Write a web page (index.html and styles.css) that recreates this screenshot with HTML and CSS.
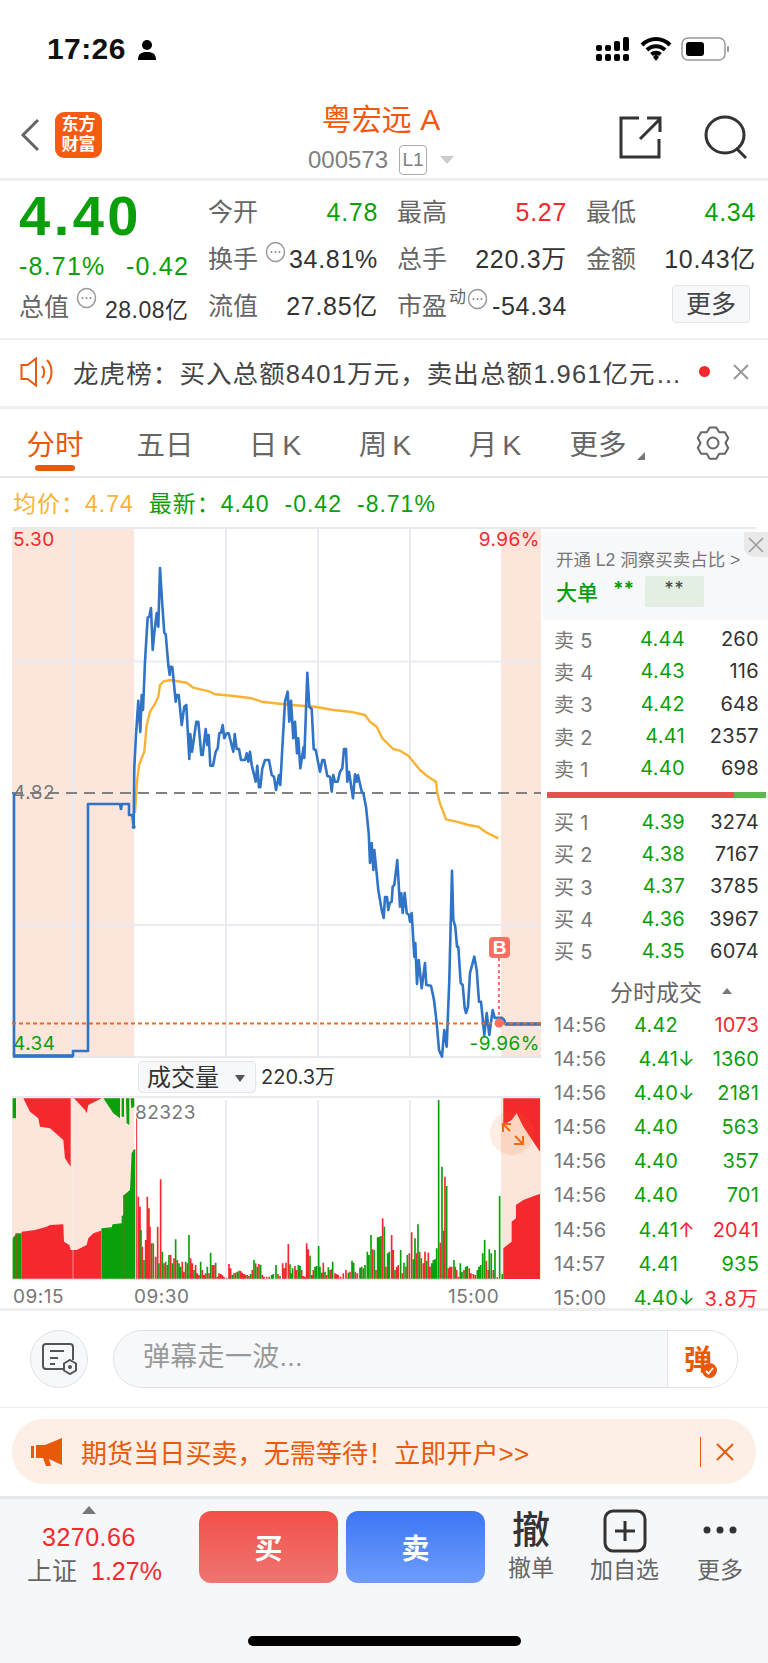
FILE: index.html
```html
<!DOCTYPE html>
<html lang="zh-CN">
<head>
<meta charset="utf-8">
<title>粤宏远A 000573</title>
<link rel="stylesheet" href="styles.css">
</head>
<body>
<div class="phone">

  <header class="status">
    <div class="clock">17:26
      <svg class="person" width="18" height="20" viewBox="0 0 18 20"><circle cx="9" cy="5" r="5"/><path d="M0 20c0-6 3-8 9-8s9 2 9 8z"/></svg>
    </div>
    <div class="sys">
      <svg width="36" height="24" viewBox="0 0 36 24"><g fill="#000"><rect x="1" y="8" width="6" height="6" rx="2"/><rect x="1" y="17" width="6" height="7" rx="2"/><rect x="10" y="8" width="6" height="6" rx="2"/><rect x="10" y="17" width="6" height="7" rx="2"/><rect x="19" y="4" width="6" height="10" rx="2"/><rect x="19" y="17" width="6" height="7" rx="2"/><rect x="28" y="0" width="6" height="14" rx="2"/><rect x="28" y="17" width="6" height="7" rx="2"/></g></svg>
      <svg width="32" height="24" viewBox="0 0 32 24"><path d="M2 8c8-8 20-8 28 0M7 13c5-5 13-5 18 0M11.500 17.500c2.500-2.500 6.500-2.500 9 0" fill="none" stroke="#000" stroke-width="4"/><path d="M13 20l3-3 3 3-3 4z"/></svg>
      <svg width="48" height="24" viewBox="0 0 48 24"><rect x="1" y="1" width="43" height="22" rx="6" fill="#fff" stroke="#999" stroke-width="1.500"/><rect x="5" y="5" width="18" height="14" rx="3"/><rect x="46" y="9" width="2" height="6" rx="1" fill="#999"/></svg>
    </div>
  </header>

  <nav class="topbar">
    <div class="topbar-left">
      <svg width="22" height="34" viewBox="0 0 22 34"><path d="M19 2L4 17l15 15" fill="none" stroke="#666" stroke-width="3"/></svg>
      <div class="logo"><span>东方</span><span>财富</span></div>
    </div>
    <div class="topbar-title">
      <div class="name">粤宏远 A</div>
      <div class="code">000573<span class="tier">L1</span><i class="caret"></i></div>
    </div>
    <div class="topbar-right">
      <svg width="44" height="44" viewBox="0 0 44 44"><path d="M21 3H3v39h38V24M22 24L42 4M29 3h13v14" fill="none" stroke="#333" stroke-width="3"/></svg>
      <svg width="44" height="44" viewBox="0 0 44 44"><ellipse cx="21" cy="20" rx="19" ry="18" fill="none" stroke="#333" stroke-width="3"/><path d="M32 33l10 10" stroke="#333" stroke-width="3"/></svg>
    </div>
  </nav>

  <section class="quote">
    <div class="quote-main">
      <div class="last">4.40</div>
      <div class="change"><span>-8.71%</span><span>-0.42</span></div>
      <div class="cap"><span class="lbl">总值</span><svg class="hint" width="21" height="22" viewBox="0 0 21 22"><use href="#more-dots"/></svg><span class="val small">28.08亿</span></div>
    </div>
    <div class="stats">
      <div class="stat"><span class="lbl">今开</span><span class="val up">4.78</span></div>
      <div class="stat"><span class="lbl">最高</span><span class="val red">5.27</span></div>
      <div class="stat"><span class="lbl">最低</span><span class="val up">4.34</span></div>
      <div class="stat"><span class="lbl">换手</span><svg class="hint h1" width="21" height="22" viewBox="0 0 21 22"><use href="#more-dots"/></svg><span class="val">34.81%</span></div>
      <div class="stat"><span class="lbl">总手</span><span class="val">220.3万</span></div>
      <div class="stat"><span class="lbl">金额</span><span class="val">10.43亿</span></div>
      <div class="stat"><span class="lbl">流值</span><span class="val">27.85亿</span></div>
      <div class="stat"><span class="lbl">市盈<sup>动</sup></span><svg class="hint h2" width="21" height="22" viewBox="0 0 21 22"><use href="#more-dots"/></svg><span class="val">-54.34</span></div>
      <div class="stat end"><button class="more">更多</button></div>
    </div>
    <svg class="defs" width="0" height="0"><defs><g id="more-dots"><ellipse cx="10.500" cy="11" rx="9" ry="9.500" fill="none" stroke="#999" stroke-width="1.500"/><g fill="#888"><circle cx="6.500" cy="11" r="1"/><circle cx="10.500" cy="11" r="1"/><circle cx="14.500" cy="11" r="1"/></g></g></defs></svg>
  </section>

  <section class="notice">
    <svg width="34" height="30" viewBox="0 0 34 30"><path d="M1.500 8h6L16 1.500v27L7.500 22h-6zM22 9c3 3 3 9 0 12M27 3c6 6 6 18 0 24" fill="none" stroke="#e85a0a" stroke-width="2"/></svg>
    <span class="notice-text">龙虎榜：买入总额8401万元，卖出总额1.961亿元…</span>
    <i class="dot"></i>
    <svg class="close" width="20" height="20" viewBox="0 0 20 20"><path d="M3 3l14 14M17 3L3 17" stroke="#999" stroke-width="2"/></svg>
  </section>

  <div class="tabs">
    <div class="tab on">分时</div>
    <div class="tab">五日</div>
    <div class="tab">日 K</div>
    <div class="tab">周 K</div>
    <div class="tab">月 K</div>
    <div class="tab more-tab">更多<i></i></div>
    <svg class="gear" width="36" height="34" viewBox="-1 -1 36 34"><path d="M13.700.4h6.600l2.900 4.800 5.700.1 3.300 5.800-2.700 4.900 2.700 5-3.300 5.700-5.700.1-2.900 4.900h-6.600l-2.900-4.900-5.700-.1-3.300-5.700 2.700-5-2.700-4.900 3.300-5.800 5.700-.1z" fill="none" stroke="#666" stroke-width="2" stroke-linejoin="round"/><circle cx="17" cy="16" r="5.500" fill="none" stroke="#666" stroke-width="2"/></svg>
  </div>

  <div class="legend">
    <span class="avg">均价：</span><span class="avg gap">4.74</span>
    <span class="up">最新：</span><span class="up gap">4.40</span><span class="up gap">-0.42</span><span class="up">-8.71%</span>
  </div>

  <section class="market">
    <div class="charts">
      <svg class="price" width="529" height="529" viewBox="12 529 529 529">
        <rect x="12" y="529" width="122" height="529" fill="#fce5da"/>
        <rect x="501" y="529" width="40" height="529" fill="#fce5da"/>
        <path d="M12 661.500H541M12 925H541M73 529V1058M226 529V1058M318 529V1058M410 529V1058" stroke="#e8ebf2" stroke-width="2" fill="none"/>
        <path d="M12 1057H541" stroke="#e2e5ea" stroke-width="1.500"/>
        <path d="M12 793H541" stroke="#808080" stroke-width="2.200" stroke-dasharray="11 7" fill="none"/>
        <text class="tick" x="13" y="546" fill="#f5282d">5.30</text>
        <text class="tick" x="540" y="546" text-anchor="end" fill="#f5282d">9.96%</text>
        <text class="tick" x="13" y="799" fill="#777">4.82</text>
        <text class="tick" x="13" y="1050" fill="#0aa00a">4.34</text>
        <text class="tick" x="540" y="1050" text-anchor="end" fill="#0aa00a">-9.96%</text>
        <polyline fill="none" stroke="#f9b233" stroke-width="2.400" stroke-linejoin="round" points="135,813 137,781.700 139,765 144.300,751.700 146.700,725 150,711.700 154.300,705 158.300,696.700 160,685 163.300,681.700 170,680 186.700,682.700 193.300,687.700 210,691.700 215,694.300 231.700,695.700 251.700,698.300 261.700,701.700 275,703.300 291.700,705 315,706.700 333.300,710 350,711.700 365,715 370,721.700 376.700,726.700 382.300,738.300 393.300,749 400,750.700 408.300,755.700 420,770 426.700,775.700 436,781.700 437.300,793.300 440,803.300 446,819.300 456.700,821.700 468.300,825 478.300,826.700 486.700,832.700 498.300,838.300"/>
        <polyline fill="none" stroke="#2f74c6" stroke-width="2.600" stroke-linejoin="round" points="14,793 14,1056 73,1056 73,1051 88,1051 88,804 120,804 121,809 122,804 129,804 129,815 132.300,815 133.700,827 134.300,768 136,735 138.300,700.700 140.300,732 141.700,695 143,710 145,661.700 146.700,633 147.700,617.700 149.300,616.700 151,608 152.700,650 154.300,633 156.700,613 158.300,626.700 160,568 162.300,605 164.300,633 165.700,634 168.300,665 169.700,675 170.300,666.700 172.300,667 175.700,701.700 176.700,695 178.700,695 181.700,725 184.300,706.700 186.300,705 189.300,759 190.300,734 192,751.700 194,738 196.300,721.700 198.300,721.700 201.300,755 202.700,755 205.700,729 207.300,745 208.700,735 210.300,765.700 213,765.700 215.700,751.700 217.700,748.300 219.300,733.300 221,732.700 222.700,725 224.300,738.300 226.700,733.300 228.700,733.300 233.300,751.700 234.700,734 236.700,749 239,749 241,760 245,760 246.700,753.300 248.300,761.700 250,751.700 251.700,765 255.700,781.700 257.300,765.700 259,787.300 260.300,787.300 262.300,768.300 265,760 269,760 271.700,775 274,776.700 276,790 279,775 280.300,785 282.300,748.300 285,701.700 287.700,691.700 289.300,721.700 291,700.700 293.300,738.300 295,721.700 297,753.300 298.300,738.300 300.300,768.300 303.700,746.700 304.300,758 307.300,672.700 309.300,706.700 311.700,709 313.700,749 315.700,750 320,771.700 322.300,760 324.300,760 327.300,776 330,776.700 331.700,791.700 333.300,775 335,781.700 337.700,781.700 340,771.700 342.300,768.300 344,749 346,749 347.300,781.700 349,771.700 353,798.300 355,774.300 356.700,781.700 358,775 361.700,791.700 363.300,793 366,806.700 368.700,833 370,863 371.700,843 373.300,870 374.300,850 376,866.700 378.300,890 381.700,910 383.700,918 385,897 387,897 388.300,910 389.700,903 391.700,901.700 392.700,886.700 394.300,885 397.300,860 400,906.700 401.300,893.300 402.700,913 404.700,893 406.700,913 409,915 410,921.700 411.700,913 414.300,956.700 415.300,943 417,984 418.700,960 421.700,988.300 425,963 426.300,985 431,985.700 434,1000 436.700,1023 439,1050 442,1056.700 444.300,1030 446.700,1046.700 449.300,980 452,870.700 453.300,920 455.300,926.700 457,946.700 458.300,946.700 460.700,983 462.700,985 464.700,1008 466,1013 468,1006.700 470,973 474.300,956.700 476.700,970 479,1001.700 481,1001.700 484.300,1035 486.700,1013 489.300,1035 492.700,1010 494.700,1018 497.300,1017.700 501.700,1017.700 504.300,1020 505.300,1024 541,1024"/>
        <path d="M505 1024H541M13 1056H73" stroke="#2f74c6" stroke-width="3.400" fill="none"/>
        <circle cx="133.700" cy="827" r="2" fill="#2f74c6"/>
        <path d="M12 1023.500H541" stroke="#ee6a22" stroke-width="2" stroke-dasharray="4 3" fill="none"/>
        <path d="M499 958V1022" stroke="#fb6f63" stroke-width="2" stroke-dasharray="3 3" fill="none"/>
        <circle cx="499" cy="1023" r="4.500" fill="#fb6f63"/>
        <rect x="489" y="937" width="21" height="21" rx="4" fill="#fb6f63"/>
        <text class="flag" x="499.500" y="954" text-anchor="middle">B</text>
      </svg>

      <div class="vol-head">
        <div class="vol-select">成交量<i></i></div>
        <span class="vol-total">220.3万</span>
      </div>

      <svg class="volume" width="529" height="212" viewBox="12 1096 529 212">
        <rect x="12" y="1098" width="122" height="181" fill="#fce5da"/>
        <rect x="501" y="1098" width="40" height="181" fill="#fce5da"/>
        <path d="M12 1097H541" stroke="#e2e5ea" stroke-width="1.500"/>
        <path d="M226 1100V1279M318 1100V1279M410 1100V1279" stroke="#e4e7ee" stroke-width="1.500"/>
        <g transform="translate(10 1090) scale(.3333)">
          <path fill="#f5282d" d="M40 25L60 65 85 85 90 110 120 115 160 150 165 205 182 230V25zM192 25L225 60 230 70 235 45 275 25zM35 567V425L75 420 110 410 120 405 160 403 162 455 178 465 182 480 200 480 230 465 235 445 250 430 273 422V567z"/>
          <path fill="#0aa00a" d="M8 25H18V85H8zM280 25L310 70 330 85V25zM335 25H342V80H335zM348 25H358V105L350 100zM362 25H373V50L364 55zM8 567V445L20 430H35V567zM274 567V415L305 412 308 403 335 400 335 378 342 375 342 315 360 300 365 190 372 178 376 178V567z"/>
          <path fill="none" stroke="#f5282d" stroke-width="3" d="M18 567V430M341 567V315M380 567V85"/>
          <path fill="none" stroke="#fff" stroke-opacity=".45" stroke-width="3" d="M189 25V567"/>
          <path fill="none" stroke="#f5282d" stroke-width="5" d="M385 567V320M390 567V350M397 567V470M407 567V450M412 567V320M417 567V355M420 567V410M430 567V460M437 567V500M443 567V410M452 567V268M462 567V520M472 567V525M482 567V495M492 567V505M502 567V510M517 567V515M522 567V545M532 567V520M542 567V505M547 567V520M557 567V525M562 567V550M567 567V555M577 567V540M582 567V555M587 567V550M597 567V550M607 567V525M612 567V525M622 567V560M627 567V550M632 567V552M637 567V555M642 567V560M657 567V522M662 567V535M672 567V550M682 567V545M692 567V543M697 567V548M702 567V552M707 567V555M717 567V558M727 567V540M737 567V520M747 567V522M757 567V555M762 567V560M770 567V560M778 567V560"/>
          <path fill="none" stroke="#0aa00a" stroke-width="5" d="M393 567V420M402 567V510M425 567V460M447 567V520M457 567V485M467 567V515M477 567V495M487 567V520M497 567V448M507 567V520M512 567V530M527 567V515M537 567V435M552 567V540M572 567V515M592 567V530M602 567V488M617 567V518M650 567V563M667 567V555M677 567V548M687 567V542M712 567V555M722 567V552M732 567V510M742 567V530M752 567V525"/>
        </g>
        <g transform="translate(270 1090) scale(.3333)">
          <path fill="none" stroke="#f5282d" stroke-width="5" d="M24 567V552M38 567V520M43 567V535M48 567V518M55 567V462M75 567V528M80 567V540M95 567V540M100 567V558M105 567V560M110 567V460M115 567V478M125 567V555M130 567V540M155 567V548M160 567V518M170 567V555M180 567V540M185 567V538M195 567V550M200 567V552M205 567V555M212 567V560M220 567V550M228 567V540M240 567V545M256 567V545M262 567V550M280 567V535M308 567V478M318 567V540M338 567V385M348 567V530M365 567V435M370 567V480M380 567V530M385 567V525M397 567V550M408 567V530M418 567V490M425 567V427M440 567V490M449 567V485M460 567V520M465 567V485M475 567V488M480 567V530M511 567V458M521 567V422M525 567V260M535 567V535M540 567V530M545 567V530M556 567V530M560 567V540M566 567V560M582 567V540M598 567V535M603 567V550M610 567V552M616 567V555M649 567V512M655 567V540M670 567V540M682 567V562"/>
          <path fill="none" stroke="#0aa00a" stroke-width="5" d="M5 567V555M10 567V552M18 567V525M30 567V558M60 567V523M65 567V550M68 567V535M85 567V525M90 567V527M120 567V497M135 567V530M140 567V528M146 567V468M150 567V530M165 567V545M175 567V532M188 567V515M235 567V548M246 567V512M251 567V518M270 567V533M275 567V530M285 567V525M292 567V485M297 567V495M303 567V435M313 567V480M323 567V442M328 567V440M333 567V438M343 567V410M353 567V490M358 567V485M375 567V540M392 567V480M402 567V518M412 567V495M430 567V508M435 567V445M444 567V403M454 567V505M470 567V512M485 567V520M490 567V510M495 567V508M500 567V475M506 567V30M516 567V230M530 567V288M552 567V510M571 567V520M576 567V545M587 567V530M592 567V528M622 567V540M627 567V530M632 567V525M638 567V490M644 567V450M658 567V478M664 567V490M675 567V480M689 567V318M697 567V552"/>
          <path fill="#f5282d" d="M700 25H810V185L790 155 760 110 740 70 725 90 700 105zM700 567V475L725 455 725 395 738 385 738 345 760 330 800 315 810 312V567z"/>
        </g>
        <circle cx="512" cy="1133" r="22" fill="#f06a14" fill-opacity=".12"/>
        <path d="M503 1132V1124H511M503 1124L510 1131M523 1136V1144H514M523 1144L515 1136" fill="none" stroke="#f06a14" stroke-width="2"/>
        <path d="M12 1279.500H501" stroke="#e2e5ea" stroke-width="1.500"/>
        <text class="tick" x="135" y="1119" fill="#777">82323</text>
        <text class="tick" x="13" y="1303" fill="#777">09:15</text>
        <text class="tick" x="134" y="1303" fill="#777">09:30</text>
        <text class="tick" x="448" y="1303" fill="#777">15:00</text>
      </svg>
    </div>

    <aside class="panel">
      <div class="promo">
        <span class="promo-x"><svg width="16" height="16" viewBox="0 0 16 16"><path d="M1 1l14 14M15 1L1 15" stroke="#999" stroke-width="1.500"/></svg></span>
        <div class="promo-title">开通 L2 洞察买卖占比 &gt;</div>
        <div class="promo-row"><b>大单</b><span class="stars">**</span><span class="starbox">**</span></div>
      </div>
      <div class="book">
        <div class="level"><span class="side">卖 5</span><span class="up">4.44</span><span>260</span></div>
        <div class="level"><span class="side">卖 4</span><span class="up">4.43</span><span>116</span></div>
        <div class="level"><span class="side">卖 3</span><span class="up">4.42</span><span>648</span></div>
        <div class="level"><span class="side">卖 2</span><span class="up">4.41</span><span>2357</span></div>
        <div class="level"><span class="side">卖 1</span><span class="up">4.40</span><span>698</span></div>
      </div>
      <div class="ratio"><i class="ratio-buy"></i></div>
      <div class="book">
        <div class="level"><span class="side">买 1</span><span class="up">4.39</span><span>3274</span></div>
        <div class="level"><span class="side">买 2</span><span class="up">4.38</span><span>7167</span></div>
        <div class="level"><span class="side">买 3</span><span class="up">4.37</span><span>3785</span></div>
        <div class="level"><span class="side">买 4</span><span class="up">4.36</span><span>3967</span></div>
        <div class="level"><span class="side">买 5</span><span class="up">4.35</span><span>6074</span></div>
      </div>
      <div class="ticks-title">分时成交<i></i></div>
      <div class="ticks">
        <div class="trade"><span class="t">14:56</span><span class="up">4.42</span><span></span><span class="red">1073</span></div>
        <div class="trade"><span class="t">14:56</span><span class="up">4.41</span><span class="up">↓</span><span class="up">1360</span></div>
        <div class="trade"><span class="t">14:56</span><span class="up">4.40</span><span class="up">↓</span><span class="up">2181</span></div>
        <div class="trade"><span class="t">14:56</span><span class="up">4.40</span><span></span><span class="up">563</span></div>
        <div class="trade"><span class="t">14:56</span><span class="up">4.40</span><span></span><span class="up">357</span></div>
        <div class="trade"><span class="t">14:56</span><span class="up">4.40</span><span></span><span class="up">701</span></div>
        <div class="trade"><span class="t">14:56</span><span class="up">4.41</span><span class="red">↑</span><span class="red">2041</span></div>
        <div class="trade"><span class="t">14:57</span><span class="up">4.41</span><span></span><span class="up">935</span></div>
        <div class="trade"><span class="t">15:00</span><span class="up">4.40</span><span class="up">↓</span><span class="red wide">3.8万</span></div>
      </div>
    </aside>
  </section>

  <section class="comment">
    <div class="doc-btn">
      <svg width="36" height="32" viewBox="0 0 36 32"><path d="M24 26H5c-2 0-3-1-3-3V4c0-2 1-3 3-3h24c2 0 3 1 3 3v13" fill="none" stroke="#555" stroke-width="2"/><path d="M9 8h14M9 15h8M9 21h5" stroke="#555" stroke-width="2"/><path d="M29 17l6 3.500v7L29 31l-6-3.500v-7z" fill="none" stroke="#555" stroke-width="2"/><circle cx="29" cy="24" r="2" fill="#555"/></svg>
    </div>
    <div class="danmu">
      <span class="danmu-hint">弹幕走一波...</span>
      <span class="danmu-send">弹<svg width="15" height="15" viewBox="0 0 15 15"><circle cx="7.500" cy="7.500" r="7.500" fill="#e85a0a"/><path d="M4 8l2.500 2.500L11 5" fill="none" stroke="#fff" stroke-width="1.800"/></svg></span>
    </div>
  </section>

  <section class="banner-wrap">
    <div class="banner">
      <svg width="32" height="28" viewBox="0 0 32 28"><path d="M0 8h3v12H0zM5 7h9L31 0v27l-13-6 2 7h-5l-3-8H5z" fill="#e85a0a"/></svg>
      <span class="banner-text">期货当日买卖，无需等待！立即开户&gt;&gt;</span>
      <i class="banner-sep"></i>
      <svg width="18" height="18" viewBox="0 0 18 18"><path d="M1 1l16 16M17 1L1 17" stroke="#e85a0a" stroke-width="2"/></svg>
    </div>
  </section>

  <footer class="dock">
    <div class="index">
      <i class="index-up"></i>
      <div class="index-val">3270.66</div>
      <div class="index-row"><span class="lbl">上证</span><span class="red">1.27%</span></div>
    </div>
    <div class="trade-btns">
      <button class="buy">买</button>
      <button class="sell">卖</button>
    </div>
    <div class="action first"><span class="glyph">撤</span><span class="cap-text">撤单</span></div>
    <div class="action add">
      <svg width="44" height="44" viewBox="0 0 44 44"><rect x="2" y="2" width="40" height="40" rx="8" fill="none" stroke="#333" stroke-width="3"/><path d="M22 12v20M12 22h20" stroke="#333" stroke-width="3"/></svg>
      <span class="cap-text">加自选</span>
    </div>
    <div class="action last-act">
      <svg width="36" height="44" viewBox="0 0 36 44"><circle cx="5" cy="21" r="3.500" fill="#333"/><circle cx="18" cy="21" r="3.500" fill="#333"/><circle cx="31" cy="21" r="3.500" fill="#333"/></svg>
      <span class="cap-text">更多</span>
    </div>
    <i class="home"></i>
  </footer>
</div>
</body>
</html>
```
FILE: styles.css
```css
* { box-sizing: border-box; }
html, body { margin: 0; padding: 0; background: #fff; }
body { font-family: "Liberation Sans", "Noto Sans CJK SC", sans-serif; color: #333; }
i { display: block; font-style: normal; }
.phone { width: 768px; height: 1663px; overflow: hidden; position: relative; }

.up { color: #0a9f0a; }
.red { color: #f5282d; }
.avg { color: #f9b233; }

/* status bar */
.status { height: 96px; display: flex; justify-content: space-between; padding: 32px 39px 0 47px; align-items: flex-start; }
.clock { font-size: 30px; font-weight: 700; color: #111; line-height: 34px; display: flex; align-items: center; gap: 12px; letter-spacing: .4px; }
.person { margin-top: 2px; }
.sys { display: flex; gap: 9px; align-items: center; margin-top: 5px; }

/* title bar */
.topbar { height: 85px; display: grid; grid-template-columns: 1fr auto 1fr; border-bottom: 3px solid #eee; }
.topbar-left { display: flex; align-items: center; gap: 14px; padding: 0 0 5px 19px; }
.logo { width: 47px; height: 46px; border-radius: 9px; background: #f95a12; color: #fff; font-size: 17px; font-weight: 700; line-height: 20px; display: flex; flex-direction: column; align-items: center; justify-content: center; }
.topbar-title { text-align: center; padding-right: 6px; }
.name { font-size: 30px; line-height: 36px; color: #f4570c; margin-top: 6px; }
.code { font-size: 24px; line-height: 32px; color: #808080; display: flex; align-items: center; justify-content: center; margin-top: 6px; }
.tier { font-size: 19px; line-height: 28px; width: 28px; border: 1px solid #aaa; border-radius: 4px; margin-left: 11px; }
.caret { border: 7px solid transparent; border-top: 8px solid #ccc; border-bottom: 0; margin-left: 13px; }
.topbar-right { display: flex; justify-content: flex-end; gap: 42px; padding: 19px 20px 0 0; }

/* quote */
.quote { height: 159px; display: flex; padding-left: 19px; border-bottom: 2px solid #eee; position: relative; }
.defs { position: absolute; }
.quote-main { width: 189px; flex: none; }
.last { font-size: 56px; font-weight: 700; line-height: 50px; color: #0a9f0a; letter-spacing: 3.500px; margin-top: 10px; }
.change { font-size: 25px; line-height: 30px; color: #0a9f0a; display: flex; justify-content: space-between; width: 170px; margin-top: 10px; letter-spacing: 1.200px; }
.cap { display: flex; align-items: center; margin-top: 6px; height: 36px; }
.cap .hint { margin: -14px 8px 0 7px; }
.cap .val { position: relative; top: 3px; }
.small { font-size: 23px; letter-spacing: .5px; }
.stats { display: grid; grid-template-columns: repeat(3, 170px); column-gap: 19px; grid-auto-rows: 47px; padding-top: 7px; }
.stat { display: flex; align-items: center; font-size: 25px; line-height: 30px; position: relative; }
.stat .val { margin-left: auto; color: #333; letter-spacing: .7px; }
.stat .val.up { color: #0a9f0a; }
.stat .val.red { color: #f5282d; }
.lbl { color: #666; font-size: 25px; }
.lbl sup { font-size: 17px; line-height: 0; vertical-align: 12px; margin-left: 2px; }
.hint { flex: none; margin-top: -14px; }
.hint.h1 { margin-left: 7px; }
.hint.h2 { margin-left: 1px; }
.end { justify-content: flex-end; }
.more { width: 78px; height: 38px; font: inherit; font-size: 25px; color: #444; background: #f7f8fa; border: 1px solid #e3e5e8; border-radius: 4px; padding: 0; margin: -3px 6px 0 0; }

/* notice */
.notice { height: 69px; display: flex; align-items: center; padding: 0 0 3px 20px; border-bottom: 3px solid #eee; }
.notice-text { font-size: 25.500px; letter-spacing: 1.100px; color: #444; margin-left: 19px; width: 626px; white-space: nowrap; }
.dot { width: 11px; height: 11px; border-radius: 50%; background: #f5282d; flex: none; }
.close { margin-left: 21px; }

/* chart tabs */
.tabs { height: 69px; display: grid; grid-template-columns: repeat(6, 110px) 1fr; border-bottom: 2px solid #e6e8ee; }
.tab { font-size: 28.500px; line-height: 34px; color: #666; text-align: center; padding-top: 19px; position: relative; word-spacing: -3px; }
.tab.on { color: #e85a0a; }
.tab.on::after { content: ""; display: block; width: 40px; height: 6px; border-radius: 3px; background: #e85a0a; margin: 3px auto 0; }
.more-tab { padding-right: 14px; }
.more-tab i { position: absolute; left: 87px; top: 43px; border: 4px solid transparent; border-right-color: #777; border-bottom-color: #777; }
.gear { margin: 17px 0 0 35px; }

/* legend */
.legend { height: 49px; padding: 12px 0 0 13px; font-size: 23px; line-height: 28px; white-space: nowrap; display: flex; }
.legend .gap { margin-right: 15px; }
.legend span { letter-spacing: 1px; }

/* market area */
.market { height: 781px; margin: 0 12px; display: flex; border-top: 2px solid #e6e9f0; }
.charts { width: 529px; flex: none; }
.price, .volume { display: block; }
.tick { font-family: Inter, "Liberation Sans", sans-serif; font-size: 19px; letter-spacing: .5px; }
.flag { font-family: "Liberation Sans", sans-serif; font-size: 19px; font-weight: 700; fill: #fff; }
.vol-head { height: 38px; padding: 3px 0 0 126px; display: flex; align-items: flex-start; }
.vol-select { width: 118px; height: 32px; border: 1px solid #e4e6ea; border-radius: 4px; background: #f7f8fa; font-size: 24px; line-height: 32px; padding-left: 8px; position: relative; color: #333; }
.vol-select i { position: absolute; left: 96px; top: 13px; border: 5px solid transparent; border-top: 7px solid #555; border-bottom: 0; }
.vol-total { font-family: Inter, "Noto Sans CJK SC", sans-serif; font-size: 20px; line-height: 32px; margin-left: 5px; color: #333; }

/* order book */
.panel { flex: 1; margin-right: -12px; position: relative; font-family: Inter, "Noto Sans CJK SC", sans-serif; padding-top: 3px; min-width: 0; }
.promo { height: 88px; background: #f7f8fa; margin: 0 0 3px 2px; padding: 17px 0 0 13px; position: relative; }
.promo-x { position: absolute; right: 0; top: 0; width: 24px; height: 25px; background: #e9e9e9; border-bottom-left-radius: 10px; display: flex; align-items: center; justify-content: center; }
.promo-title { font-family: "Liberation Sans", "Noto Sans CJK SC", sans-serif; font-size: 17.500px; line-height: 22px; color: #777; white-space: nowrap; }
.promo-row { display: flex; align-items: flex-start; color: #0a9f0a; margin-top: 5px; }
.promo-row b { font-family: "Noto Sans CJK SC", sans-serif; font-size: 21px; line-height: 30px; font-weight: 500; }
.stars { font-size: 19px; line-height: 26px; font-weight: 700; margin-left: 15px; width: 32px; }
.starbox { width: 59px; height: 31px; background: #e2efe2; color: #444; font-size: 18px; line-height: 26px; text-align: center; border-radius: 2px; letter-spacing: 1px; }
.book { display: grid; grid-auto-rows: 32.300px; padding-left: 13px; padding-right: 9px; }
.level { display: grid; grid-template-columns: 61px 70px 1fr; align-items: center; font-size: 20px; letter-spacing: .3px; color: #333; }
.level span { text-align: right; }
.level .side { text-align: left; color: #777; }
.ratio { margin: 8px 2px 7px 6px; height: 6px; background: #5ab94a; }
.ratio-buy { width: 187px; height: 6px; background: #e8504f; }
.ticks-title { font-family: "Noto Sans CJK SC", sans-serif; font-size: 23px; line-height: 34px; color: #666; padding-left: 69px; display: flex; align-items: center; white-space: nowrap; margin-top: 7px; }
.ticks-title i { border: 5px solid transparent; border-bottom: 6px solid #777; border-top: 0; margin-left: 20px; }
.ticks { display: grid; grid-auto-rows: 34.100px; padding: 0 9px 0 13px; }
.trade { display: grid; grid-template-columns: 60px 64px 16px 1fr; align-items: center; font-size: 20px; letter-spacing: .2px; white-space: nowrap; }
.trade span { text-align: right; }
.trade .t { text-align: left; color: #777; }
.trade .wide { letter-spacing: 1.200px; }

/* comment bar */
.comment { height: 100px; border-top: 3px solid #eee; display: flex; align-items: center; padding: 0 30px; gap: 25px; border-bottom: 1px solid #eee; }
.doc-btn { width: 58px; height: 58px; border-radius: 50%; background: #f7f8fa; border: 1px solid #dfe2e8; display: flex; align-items: center; justify-content: center; flex: none; }
.danmu { flex: 1; height: 58px; border: 1px solid #dfe2e8; border-radius: 29px; background: #f7f8fa; display: flex; justify-content: space-between; overflow: hidden; }
.danmu-hint { font-size: 27px; line-height: 52px; color: #999; padding-left: 29px; letter-spacing: .3px; }
.danmu-send { width: 70px; background: #fff; border-left: 1px solid #dfe2e8; color: #e85a0a; font-family: "Noto Sans CJK SC", sans-serif; font-size: 28px; font-weight: 700; line-height: 54px; padding-left: 16px; position: relative; }
.danmu-send svg { position: absolute; left: 34px; top: 32px; }

/* promo banner */
.banner-wrap { height: 91px; padding: 11px 12px 0; border-bottom: 3px solid #e6e8ec; }
.banner { height: 65px; background: #fdeee6; border-radius: 32px; display: flex; align-items: center; padding-left: 19px; }
.banner-text { font-size: 26px; color: #e85a0a; margin-left: 18px; width: 619px; white-space: nowrap; letter-spacing: .1px; }
.banner-sep { width: 1px; height: 30px; background: #e85a0a; }
.banner svg:last-child { margin-left: 15px; }

/* bottom dock */
.dock { height: 164px; background: #f6f7f9; display: flex; position: relative; padding-top: 12px; align-items: flex-start; }
.index { width: 199px; flex: none; padding-left: 27px; }
.index-up { width: 0; border: 7px solid transparent; border-bottom: 8px solid #777; border-top: 0; margin: -5px 0 0 55px; }
.index-val { font-size: 25px; line-height: 30px; color: #f5282d; padding-left: 15px; margin-top: 8px; letter-spacing: .5px; }
.index-row { font-size: 25px; line-height: 30px; display: flex; gap: 14px; margin-top: 4px; white-space: nowrap; }
.trade-btns { display: flex; gap: 8px; flex: none; }
.trade-btns button { width: 139px; height: 72px; border: 0; border-radius: 12px; color: #fff; font-family: "Noto Sans CJK SC", sans-serif; font-size: 28px; font-weight: 700; padding: 0; }
.buy { background: linear-gradient(#f4504a, #ee7570); }
.sell { background: linear-gradient(#3d76f5, #6e9dfc); }
.action { display: flex; flex-direction: column; align-items: center; position: absolute; top: 10px; }
.action svg { display: block; }
.cap-text { font-size: 23px; line-height: 28px; color: #666; white-space: nowrap; margin-top: 3px; }
.glyph { font-family: "Noto Sans CJK SC", sans-serif; font-size: 38px; line-height: 44px; color: #333; font-weight: 500; margin: -4px 0 2px; }
.first { left: 508px; }
.add { left: 590px; }
.last-act { left: 697px; }
.home { position: absolute; left: 248px; top: 137px; width: 273px; height: 10px; border-radius: 5px; background: #000; }
```
